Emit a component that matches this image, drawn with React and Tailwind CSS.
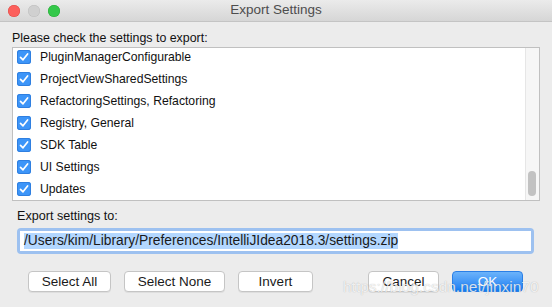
import React from 'react';

const items = [
  'PluginManagerConfigurable',
  'ProjectViewSharedSettings',
  'RefactoringSettings, Refactoring',
  'Registry, General',
  'SDK Table',
  'UI Settings',
  'Updates',
];

function CheckBox() {
  return (
    <span className="flex h-[14px] w-[14px] items-center justify-center rounded-[3px] bg-[#3d95f8] shadow-[inset_0_0_0_1px_#2f7fe0]">
      <svg viewBox="0 0 14 14" className="h-[14px] w-[14px]" fill="none">
        <path d="M3.5 7.3 L6 9.8 L10.6 4" stroke="white" strokeWidth="1.7" strokeLinecap="round" strokeLinejoin="round" />
      </svg>
    </span>
  );
}

function Button({ children, primary, width }) {
  if (primary) {
    return (
      <button className={`h-[21px] ${width} rounded-[4px] bg-gradient-to-b from-[#6cb3fa] to-[#0d7cf2] border border-[#2a7fe6] text-[13.5px] text-white leading-none`}>
        {children}
      </button>
    );
  }
  return (
    <button className={`h-[21px] ${width} rounded-[4px] bg-white border border-[#c5c5c5] shadow-[0_1px_0_rgba(0,0,0,0.06)] text-[13.5px] text-[#1a1a1a] leading-none`}>
      {children}
    </button>
  );
}

export default function App() {
  return (
    <div className="relative h-[307px] w-[552px] overflow-hidden bg-[#ececec] font-['Liberation_Sans',Arial,sans-serif] text-[#1a1a1a]">
      <div className="relative flex h-[22px] items-center border-b border-[#c4c4c4] bg-gradient-to-b from-[#ebebeb] to-[#d6d6d6]">
        <div className="flex items-center gap-[8px] pl-[8px]">
          <span className="h-[12px] w-[12px] rounded-full bg-[#fc605c] shadow-[inset_0_0_0_0.5px_#de4a46]" />
          <span className="h-[12px] w-[12px] rounded-full bg-[#d0d0d0] shadow-[inset_0_0_0_0.5px_#bdbdbd]" />
          <span className="h-[12px] w-[12px] rounded-full bg-[#34c84a] shadow-[inset_0_0_0_0.5px_#27aa35]" />
        </div>
        <div className="absolute inset-0 flex items-center justify-center text-[13.5px] text-[#4d4d4d]">Export Settings</div>
      </div>

      <div className="px-[12px] pt-[8px]">
        <div className="h-[17px] text-[12.4px] leading-[17px] text-[#111]">Please check the settings to export:</div>
        <div className="flex h-[154px] w-[528px] border border-[#c0c0c0] bg-white">
          <div className="flex-1 overflow-hidden">
            <div className="-mt-[2px]">
              {items.map((t) => (
                <div key={t} className="flex h-[22px] items-center gap-[9px] pl-[4px] text-[12.2px] text-[#111]">
                  <CheckBox />
                  <span>{t}</span>
                </div>
              ))}
            </div>
          </div>
          <div className="relative w-[14px] border-l border-[#e6e6e6] bg-[#f6f6f6]">
            <div className="absolute left-[2px] top-[123px] h-[25px] w-[8px] rounded-full bg-[#c2c2c2]" />
          </div>
        </div>
      </div>

      <div className="px-[17px] pt-[7px]">
        <div className="h-[17px] text-[12.6px] leading-[17px] text-[#111]">Export settings to:</div>
        <div className="mt-[3px] h-[26px] w-[517px] rounded-[4px] bg-[#9dc1f0] p-[3px]">
          <div className="flex h-[20px] items-center bg-white pl-[4px] text-[13.8px]">
            <span className="bg-[#b3d7ff] leading-[16px]">/Users/kim/Library/Preferences/IntelliJIdea2018.3/settings.zip</span>
          </div>
        </div>
      </div>

      <div className="flex items-center pl-[28px] pt-[17px]">
        <Button width="w-[83px]">Select All</Button>
        <div className="w-[13px]" />
        <Button width="w-[101px]">Select None</Button>
        <div className="w-[13px]" />
        <Button width="w-[75px]">Invert</Button>
        <div className="flex-1" />
        <Button width="w-[71px]">Cancel</Button>
        <div className="w-[13px]" />
        <Button primary width="w-[71px]">OK</Button>
        <div className="w-[29px]" />
      </div>

      <div className="pointer-events-none absolute left-[343px] top-[278px] text-[15.5px] leading-[18px] text-white/80 [text-shadow:0_0_1px_rgba(0,0,0,0.3)]">
        https://blog.csdn.net/jinxin70
      </div>
    </div>
  );
}
